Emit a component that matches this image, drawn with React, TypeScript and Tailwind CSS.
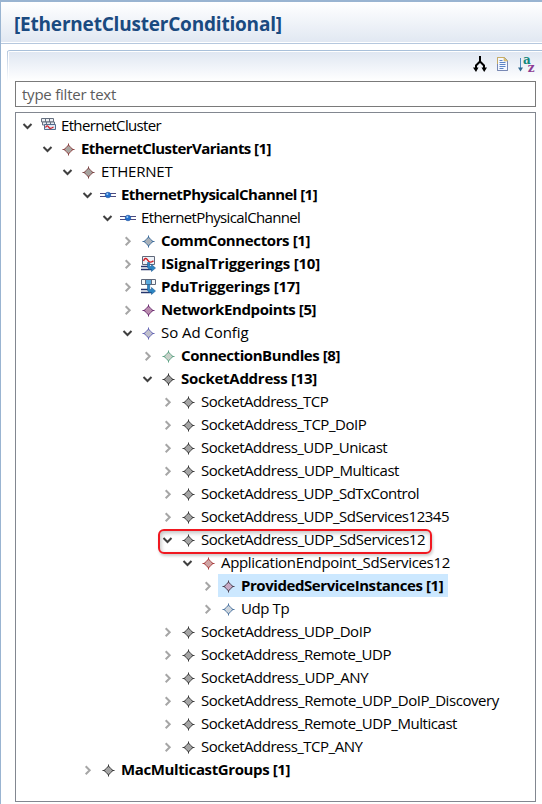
type IconName = "cluster" | "star" | "channel" | "signal" | "pdu";

type Node = {
  label: string;
  level: number;
  tracking: string;
  icon?: IconName;
  stroke?: string;
  fill?: string;
  open?: boolean;
  bold?: boolean;
  selected?: boolean;
  marked?: boolean;
};

const indent = [
  "pl-0",
  "pl-5",
  "pl-10",
  "pl-15",
  "pl-20",
  "pl-25",
  "pl-30",
  "pl-35",
  "pl-40",
  "pl-45",
];

const nodes: Node[] = [
  { label: "EthernetCluster", level: 0, icon: "cluster", open: true, tracking: "tracking-[-0.66px]" },
  { label: "EthernetClusterVariants [1]", level: 1, stroke: "#8c4040", fill: "#a9a5a0", open: true, bold: true, tracking: "tracking-[-0.55px]" },
  { label: "ETHERNET", level: 2, stroke: "#7c4444", fill: "#a5a29e", open: true, tracking: "tracking-[-0.2px]" },
  { label: "EthernetPhysicalChannel [1]", level: 3, icon: "channel", open: true, bold: true, tracking: "tracking-[-0.55px]" },
  { label: "EthernetPhysicalChannel", level: 4, icon: "channel", open: true, tracking: "tracking-[-0.64px]" },
  { label: "CommConnectors [1]", level: 5, stroke: "#3c6c9c", fill: "#a8b0b8", bold: true, tracking: "tracking-[-0.38px]" },
  { label: "ISignalTriggerings [10]", level: 5, icon: "signal", bold: true, tracking: "tracking-[-0.21px]" },
  { label: "PduTriggerings [17]", level: 5, icon: "pdu", bold: true, tracking: "tracking-[-0.2px]" },
  { label: "NetworkEndpoints [5]", level: 5, stroke: "#6c2c70", fill: "#b98cae", bold: true, tracking: "tracking-[-0.4px]" },
  { label: "So Ad Config", level: 5, stroke: "#6464b4", fill: "#c0c0cc", open: true, tracking: "tracking-[-0.06px]" },
  { label: "ConnectionBundles [8]", level: 6, stroke: "#60a486", fill: "#c8d0c8", bold: true, tracking: "tracking-[-0.43px]" },
  { label: "SocketAddress [13]", level: 6, stroke: "#303030", fill: "#9c9c9c", open: true, bold: true, tracking: "tracking-[-0.27px]" },
  { label: "SocketAddress_TCP", level: 7, tracking: "tracking-[-0.52px]" },
  { label: "SocketAddress_TCP_DoIP", level: 7, tracking: "tracking-[-0.48px]" },
  { label: "SocketAddress_UDP_Unicast", level: 7, tracking: "tracking-[-0.5px]" },
  { label: "SocketAddress_UDP_Multicast", level: 7, tracking: "tracking-[-0.46px]" },
  { label: "SocketAddress_UDP_SdTxControl", level: 7, tracking: "tracking-[-0.49px]" },
  { label: "SocketAddress_UDP_SdServices12345", level: 7, tracking: "tracking-[-0.48px]" },
  { label: "SocketAddress_UDP_SdServices12", level: 7, open: true, marked: true, tracking: "tracking-[-0.47px]" },
  { label: "ApplicationEndpoint_SdServices12", level: 8, stroke: "#a83c3c", fill: "#cfa4a4", open: true, tracking: "tracking-[-0.33px]" },
  { label: "ProvidedServiceInstances [1]", level: 9, stroke: "#4c4050", fill: "#c8a8c4", bold: true, selected: true, tracking: "tracking-[-0.43px]" },
  { label: "Udp Tp", level: 9, stroke: "#4c74a0", fill: "#ccd4dc", tracking: "tracking-[-0.4px]" },
  { label: "SocketAddress_UDP_DoIP", level: 7, tracking: "tracking-[-0.45px]" },
  { label: "SocketAddress_Remote_UDP", level: 7, tracking: "tracking-[-0.46px]" },
  { label: "SocketAddress_UDP_ANY", level: 7, tracking: "tracking-[-0.42px]" },
  { label: "SocketAddress_Remote_UDP_DoIP_Discovery", level: 7, tracking: "tracking-[-0.44px]" },
  { label: "SocketAddress_Remote_UDP_Multicast", level: 7, tracking: "tracking-[-0.45px]" },
  { label: "SocketAddress_TCP_ANY", level: 7, tracking: "tracking-[-0.5px]" },
  { label: "MacMulticastGroups [1]", level: 3, bold: true, tracking: "tracking-[-0.38px]" },
];

function Twistie({ open }: { open?: boolean }) {
  return (
    <svg width="22" height="16" viewBox="0 0 22 16" fill="none" className="shrink-0">
      {open ? (
        <path d="M7.5 6l4 4 4-4" stroke="#404040" strokeWidth="2" />
      ) : (
        <path d="M9.7 4.2l4 4-4 4" stroke="#a6a6a6" strokeWidth="2" />
      )}
    </svg>
  );
}

function NodeIcon({ node }: { node: Node }) {
  const { icon = "star", stroke = "#383838", fill = "#a4a4a4" } = node;

  return (
    <svg width="16" height="16" viewBox="0 0 16 16" fill="none" className="shrink-0">
      {icon === "star" && (
        <>
          <path d="M8.5 2.5v12M2.5 8.5h12" stroke={stroke} strokeWidth="1" />
          <path
            d="M8.5 4L10.6 6.4L13 8.5L10.6 10.6L8.5 13L6.4 10.6L4 8.5L6.4 6.4Z"
            fill={fill}
            stroke={stroke}
            strokeWidth="1"
          />
        </>
      )}
      {icon === "channel" && (
        <>
          <path d="M0 6.5h16M0 9.5h16" stroke="#4a4a80" strokeWidth="1" />
          <circle cx="8" cy="8" r="2.8" fill="#2470cc" stroke="#1c50a0" strokeWidth=".6" />
          <circle cx="7.3" cy="7" r="1" fill="#9ccaf4" />
        </>
      )}
      {icon === "cluster" && (
        <>
          <path d="M1.5 .5h12v3.500h-12zM5.500 .5v3.500M9.500 .5v3.500" fill="#edf0f4" stroke="#667080" />
          <path d="M2.500 4h12v3h-12zM6.500 4v3M10.500 4v3" fill="#e4eaf2" stroke="#667080" />
          <path d="M4.500 6.500h11v5h-11z" fill="#dfe9f5" stroke="#536b8c" />
          <path d="M5.500 9.500c1.200-2.200 2.200-2.200 3.200-.4s2.200 1.700 4.800 0" stroke="#d01c24" strokeWidth="1.200" />
        </>
      )}
      {icon === "signal" && (
        <>
          <path d="M2.500 .5h12v8h-12z" fill="#eef2f8" stroke="#60687a" />
          <path d="M3.500 5c1.200-3.200 2.800-3.200 4.200-.8s3 2.500 5.800.6" stroke="#d01c24" strokeWidth="1.400" />
          <path d="M1 10.500h8M1 13.500h11" stroke="#26366c" strokeWidth="1.400" />
          <path d="M7.500 6.500h2.200v4h1.800v-2l4 3.500-4 3.500v-2.200h-2.500l-1.500-2z" fill="#2c86c4" stroke="#1e5c96" strokeWidth=".6" />
        </>
      )}
      {icon === "pdu" && (
        <>
          <path d="M1.500 .5h14v5h-14z" fill="#f4f6f8" stroke="#60687a" />
          <path d="M5.500 .5h6v5h-6z" fill="#58a8dc" stroke="#60687a" />
          <path d="M1 10.500h8M1 13.500h11" stroke="#26366c" strokeWidth="1.400" />
          <path d="M7.500 5.500h2.200v5h1.800v-2l4 3.500-4 3.500v-2.200h-2.500l-1.500-2z" fill="#2c86c4" stroke="#1e5c96" strokeWidth=".6" />
        </>
      )}
    </svg>
  );
}

function TreeRow({ node }: { node: Node }) {
  return (
    <div className={`relative flex h-[23px] items-center ${indent[node.level]}`}>
      {node.marked && (
        <div className="absolute left-[142px] top-[1px] h-[25px] w-[274px] rounded-[6px] border-2 border-[#f01820] shadow-[inset_1px_2px_4px_rgba(0,0,0,0.25),1px_2px_3px_rgba(0,0,0,0.2)]" />
      )}
      <Twistie open={node.open} />
      <div
        className={`flex h-[23px] items-center gap-[5px] pl-[2px] pr-[5px] ${
          node.selected ? "bg-[#cce8ff]" : ""
        }`}
      >
        <NodeIcon node={node} />
        <span
          className={`whitespace-nowrap ${node.tracking} ${
            node.bold ? "font-bold" : ""
          }`}
        >
          {node.label}
        </span>
      </div>
    </div>
  );
}

function Toolbar() {
  return (
    <div className="flex h-[29px] items-start justify-end gap-2 pr-[7px] pt-[4px]">
      <svg width="14" height="17" viewBox="0 0 14 17" fill="none">
        <path d="M7 0v6.500M7 5.500L3 9.500V14M7 5.500L11 9.500V14" stroke="#000" strokeWidth="2" />
        <path d="M0 11.500h5.500L3 16zM8.500 11.500H14L11.200 16z" fill="#000" />
      </svg>
      <svg width="15" height="17" viewBox="0 0 15 17" fill="none">
        <path d="M2.500 1.500h7l3 3v10h-10z" fill="#f4f8ff" stroke="#9a9a90" />
        <path d="M2.500 8V1.500h7" stroke="#c8ac64" />
        <path d="M12.500 5v9.500h-10V8" stroke="#7888b4" />
        <path d="M9 1.500v3.500h3.500z" fill="#e4c878" stroke="#c8ac64" strokeWidth=".6" />
        <path d="M4.500 4.500h3M4.500 6.500h6M4.500 8.500h6M4.500 10.500h6M4.500 12.500h4" stroke="#5c84c4" />
      </svg>
      <div className="flex h-[17px] w-[17px] font-['DejaVu_Serif',serif] text-[12px] leading-[8px] font-bold">
        <svg width="5" height="17" viewBox="0 0 5 17" fill="none" className="shrink-0">
          <path d="M2.500 2v12" stroke="#4c8cc0" />
          <path d="M0 11.500h5L2.500 15.500z" fill="#306890" />
        </svg>
        <span className="text-[#14887c]">a</span>
        <span className="-ml-[3px] pt-[8px] text-[#8c3c94]">z</span>
      </div>
    </div>
  );
}

export default function App() {
  return (
    <div className="flex h-[804px] w-[542px] flex-col overflow-hidden border-l border-t-2 border-[#99b4d1] bg-white font-['Open_Sans',sans-serif] text-[15px] leading-[23px] text-black">
      <header className="flex h-10 shrink-0 items-center bg-linear-to-b from-white to-[#e1e8f2] pl-[13px] pt-[4px]">
        <h1 className="whitespace-nowrap text-[19px] font-bold tracking-[-0.2px] text-[#1a4a80]">
          [EthernetClusterConditional]
        </h1>
      </header>
      <div className="mt-px h-px shrink-0 bg-[#b6c8de]" />

      <section className="relative ml-[6px] mt-[6px] flex grow flex-col rounded-tl-[3px] border-t border-[#a9c0da] pl-[8px]">
        <div className="absolute left-0 top-0 h-[31px] w-px bg-linear-to-b from-[#b6c8de] to-white" />
        <div className="ml-[-6px] mt-px bg-linear-to-b from-[#e0e7f2] to-white">
          <Toolbar />
        </div>
        <input
          placeholder="type filter text"
          className="h-[26px] w-[521px] border border-[#7a7a7a] bg-white px-[6px] tracking-[-0.23px] outline-none placeholder:text-[#5c5c5c]"
        />
        <div className="mt-[5px] h-[690px] w-[521px] border border-[#828790] pt-px">
          {nodes.map((node) => (
            <TreeRow key={node.label + node.level} node={node} />
          ))}
        </div>
      </section>
    </div>
  );
}
